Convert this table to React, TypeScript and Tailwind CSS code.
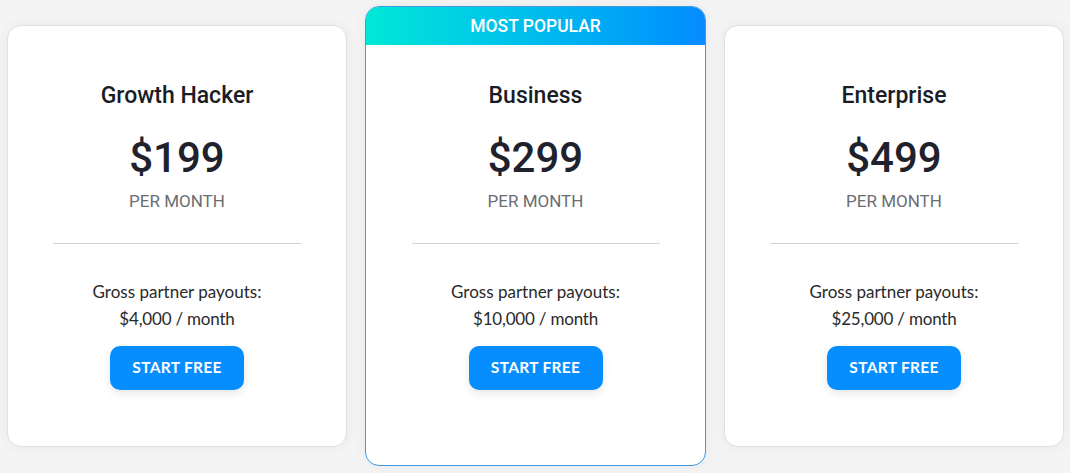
const plans = [
  { name: "Growth Hacker", price: "$199", payout: "$4,000 / month", popular: false },
  { name: "Business", price: "$299", payout: "$10,000 / month", popular: true },
  { name: "Enterprise", price: "$499", payout: "$25,000 / month", popular: false },
];

const PlanCard = ({ plan }: { plan: (typeof plans)[number] }) => {
  return (
    <div
      className={
        plan.popular
          ? "w-[341px] flex flex-col rounded-[14px] border border-[#3d9be0] bg-white overflow-hidden shadow-[0_0_14px_rgba(0,0,0,0.05)]"
          : "w-[340px] my-[19px] flex flex-col rounded-[14px] border border-[#e0e0e0] bg-white overflow-hidden shadow-[0_0_14px_rgba(0,0,0,0.05)]"
      }
    >
      {plan.popular && (
        <div className="h-[38px] flex items-center justify-center bg-gradient-to-r from-[#00e8d6] to-[#0a8bff] text-white text-[17.5px] font-medium font-['Roboto',sans-serif]">
          MOST POPULAR
        </div>
      )}
      <div
        className={
          plan.popular
            ? "flex flex-col items-center pt-[37px] pb-[75px]"
            : "flex flex-col items-center pt-[56px] pb-[56px]"
        }
      >
        <h2 className="text-[23px] leading-[28px] font-medium text-[#1a1d26] font-['Roboto',sans-serif]">
          {plan.name}
        </h2>
        <div className="mt-[22px] text-[42px] leading-[52px] font-medium text-[#1f222c] font-['Roboto',sans-serif]">
          {plan.price}
        </div>
        <div className="mt-[7px] text-[17px] leading-[20px] text-[#6b6d72] font-['Roboto',sans-serif]">
          PER MONTH
        </div>
        <div className="mt-[32px] w-[248px] h-px bg-[#d4d4d4]" />
        <div className="mt-[34px] text-[17px] leading-[27px] text-[#2a2a2a] text-center font-['Lato',sans-serif]">
          <div>Gross partner payouts:</div>
          <div className="tracking-[-0.2px]">{plan.payout}</div>
        </div>
        <button className="mt-[14px] w-[134px] h-[44px] rounded-[10px] bg-[#068eff] text-white text-[15.5px] font-bold tracking-[0.3px] shadow-[0_3px_8px_rgba(0,0,0,0.1)] font-['Lato',sans-serif]">
          START FREE
        </button>
      </div>
    </div>
  );
};

export default function App() {
  return (
    <div className="w-[1070px] h-[473px] bg-[#f4f4f4] flex items-start gap-[18px] pl-[7px] pt-[6px]">
      {plans.map((p) => (
        <PlanCard key={p.name} plan={p} />
      ))}
    </div>
  );
}
